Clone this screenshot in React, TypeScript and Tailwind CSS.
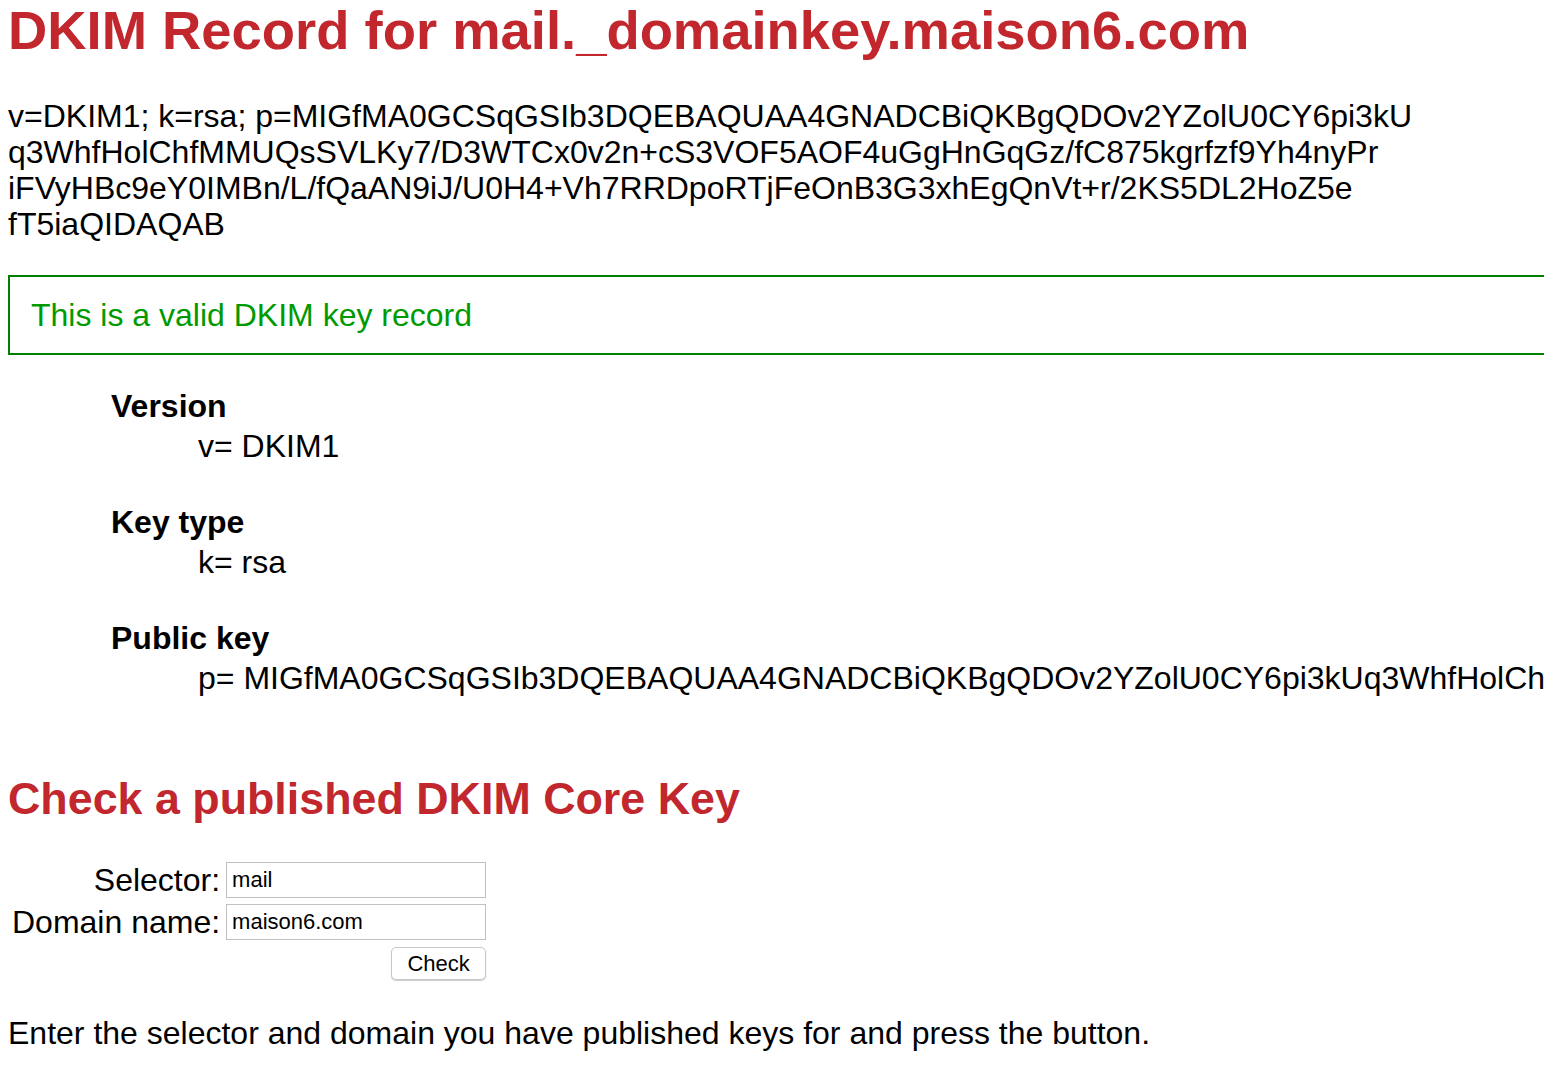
const recordLines = [
  "v=DKIM1; k=rsa; p=MIGfMA0GCSqGSIb3DQEBAQUAA4GNADCBiQKBgQDOv2YZolU0CY6pi3kU",
  "q3WhfHolChfMMUQsSVLKy7/D3WTCx0v2n+cS3VOF5AOF4uGgHnGqGz/fC875kgrfzf9Yh4nyPr",
  "iFVyHBc9eY0IMBn/L/fQaAN9iJ/U0H4+Vh7RRDpoRTjFeOnB3G3xhEgQnVt+r/2KS5DL2HoZ5e",
  "fT5iaQIDAQAB",
];

const publicKey =
  "MIGfMA0GCSqGSIb3DQEBAQUAA4GNADCBiQKBgQDOv2YZolU0CY6pi3kUq3WhfHolChfMMUQsSVLKy7/D3WTCx0v2n+cS3VOF5AOF4uGgHnGqGz/fC875kgrfzf9Yh4nyPriFVyHBc9eY0IMBn/L/fQaAN9iJ/U0H4+Vh7RRDpoRTjFeOnB3G3xhEgQnVt+r/2KS5DL2HoZ5efT5iaQIDAQAB";

const tags = [
  { label: "Version", value: "v= DKIM1" },
  { label: "Key type", value: "k= rsa" },
  { label: "Public key", value: `p= ${publicKey}` },
];

export const App = () => {
  return (
    <main className="min-h-[1086px] overflow-hidden bg-white font-['Liberation_Sans',Arial,sans-serif] text-black">
      <div className="px-2">
        <h1 className="text-[54.4px] font-bold leading-[62px] text-[#c1272d]">
          DKIM Record for mail._domainkey.maison6.com
        </h1>

        <p className="mt-9 text-[32px] leading-[36px] whitespace-nowrap">
          {recordLines.map((line) => (
            <span key={line} className="block">
              {line}
            </span>
          ))}
        </p>

        <div className="mt-[33px] -mr-10 border-2 border-[#008000] px-[21px] py-[20px] text-[32px] leading-[36px] text-[#009a00]">
          This is a valid DKIM key record
        </div>

        <dl className="mt-[31px] pl-[103px] text-[32px] leading-[40px]">
          {tags.map((tag) => (
            <div key={tag.label} className="mb-9 last:mb-0">
              <dt className="font-bold">{tag.label}</dt>
              <dd className="ml-[87px] whitespace-nowrap">{tag.value}</dd>
            </div>
          ))}
        </dl>

        <h2 className="mt-[74px] text-[44.8px] font-bold leading-[52px] text-[#c1272d]">
          Check a published DKIM Core Key
        </h2>

        <form
          className="mt-[38px] grid w-max grid-cols-[auto_260px] items-center gap-x-[6px] gap-y-[6px] text-[32px] leading-[36px]"
          onSubmit={(e) => e.preventDefault()}
        >
          <label className="text-right pl-1">Selector:</label>
          <input
            defaultValue="mail"
            className="h-[36px] border border-[#c0c0c0] px-[5px] text-[22px] outline-none"
          />
          <label className="text-right pl-1">Domain name:</label>
          <input
            defaultValue="maison6.com"
            className="h-[36px] border border-[#c0c0c0] px-[5px] text-[22px] outline-none"
          />
          <div />
          <div className="mt-[1px] flex justify-end">
            <button
              type="submit"
              className="h-[33px] w-[95px] rounded-[5px] border border-[#c8c8c8] bg-white text-[22px] leading-none shadow-[0_1px_1px_rgba(0,0,0,0.2)]"
            >
              Check
            </button>
          </div>
        </form>

        <p className="mt-[35px] text-[32px] leading-[36px]">
          Enter the selector and domain you have published keys for and press the button.
        </p>
      </div>
    </main>
  );
};

export default App;
